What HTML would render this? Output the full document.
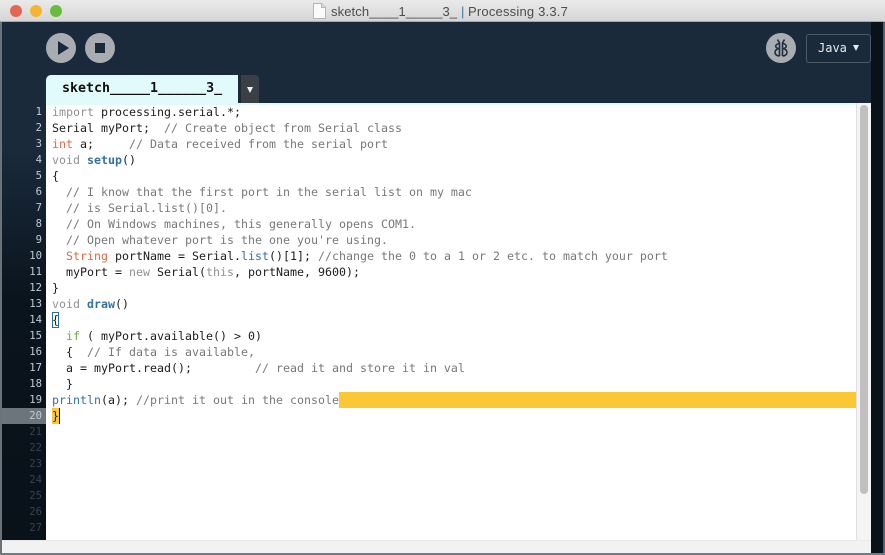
<!DOCTYPE html>
<html><head><meta charset="utf-8">
<style>
html,body{margin:0;padding:0;width:885px;height:555px;overflow:hidden;background:#5c6670;}
*{box-sizing:border-box}
.a{position:absolute}
#win{position:absolute;left:2px;top:0;width:869px;height:553px;background:#1a2a3b;overflow:hidden}
#bg-l{position:absolute;left:0;top:0;width:2px;height:555px;background:#6b7278}
#bg-r{position:absolute;left:871px;top:0;width:12px;height:555px;background:#091119}
#bg-r2{position:absolute;left:883px;top:0;width:2px;height:555px;background:#4f6272}
#title{position:absolute;left:0;top:0;width:885px;height:22px;background:linear-gradient(#eaeaea,#d6d6d6);border-bottom:1px solid #a9a9a9}
.dot{position:absolute;top:5px;width:12px;height:12px;border-radius:50%}
#ttl{position:absolute;left:331px;top:3px;font:13px/17px "Liberation Sans",sans-serif;color:#4c4c4c;white-space:pre}
#ttl2{position:absolute;left:468px;top:3px;font:13px/17px "Liberation Sans",sans-serif;color:#4c4c4c;white-space:pre;letter-spacing:.2px}
#code,#nums{position:absolute;font:11.63px/16px "DejaVu Sans Mono",monospace;white-space:pre}
#code{left:52px;top:104px;color:#1c1c1c}
#nums{left:2px;top:104px;width:40px;text-align:right;color:#c4cad0;font-size:10.6px}
#nums .d{color:#39424b}
.c{color:#787878}.k{color:#8f9295}.r{color:#dc6a45}.b{color:#33729f}.bb{color:#33729f;font-weight:bold}.g{color:#64b332}
</style></head>
<body>
<div id="bg-l"></div><div id="bg-r"></div><div id="bg-r2"></div>
<div id="win"></div>
<div id="title"></div>
<div class="dot" style="left:10px;background:#e4664f"></div>
<div class="dot" style="left:30px;background:#f5b62f"></div>
<div class="dot" style="left:50px;background:#68bd3f"></div>
<svg class="a" style="left:313px;top:3px" width="13" height="16"><path d="M.5.5H8.5L12.5 4.5V15.5H.5Z" fill="#fafafa" stroke="#b5b5b5"/><path d="M8.5.5V4.5H12.5" fill="#ddd" stroke="#b5b5b5"/></svg>
<div id="ttl" style="letter-spacing:.1px">sketch____1_____3_</div>
<div class="a" style="left:461px;top:3px;font:13px/17px 'Liberation Sans',sans-serif;color:#3b78ad">|</div>
<div id="ttl2">Processing 3.3.7</div>

<div class="a" style="left:46px;top:33px;width:30px;height:30px;border-radius:50%;background:#a9adb1"></div>
<svg class="a" style="left:46px;top:33px" width="30" height="30"><path d="M12 8V22L23 15Z" fill="#1a2a3b"/></svg>
<div class="a" style="left:85px;top:33px;width:30px;height:30px;border-radius:50%;background:#a9adb1"></div>
<div class="a" style="left:95px;top:43px;width:10px;height:10px;background:#1a2a3b"></div>

<div class="a" style="left:766px;top:33px;width:30px;height:30px;border-radius:50%;background:#a9adb1"></div>
<svg class="a" style="left:766px;top:33px" width="30" height="30" fill="none" stroke="#1f2f40" stroke-width="1.6"><path d="M11.5 6.5L13.5 10V23"/><path d="M18.5 6.5L16.5 10V23"/><path d="M13.5 10.5C8.5 11 8.5 15.5 13.5 15.5C7.5 16 7.5 23 13.5 23"/><path d="M16.5 10.5C21.5 11 21.5 15.5 16.5 15.5C22.5 16 22.5 23 16.5 23"/></svg>
<div class="a" style="left:806px;top:34px;width:65px;height:29px;border:1px solid #4c5966;border-radius:3px"></div>
<div class="a" style="left:818px;top:40px;font:12px/16px 'DejaVu Sans Mono',monospace;color:#e8ebee">Java</div>
<svg class="a" style="left:853px;top:45px" width="6" height="6"><path d="M0 0H6L3 6Z" fill="#e8ebee"/></svg>

<div class="a" style="left:46px;top:75px;width:192px;height:28px;background:#e0fbf9;border-radius:5px 0 0 0"></div>
<div class="a" style="left:62px;top:80px;font:bold 13.3px/17px 'DejaVu Sans Mono',monospace;color:#111;white-space:pre">sketch_____1______3_</div>
<div class="a" style="left:241px;top:75px;width:18px;height:28px;background:#3a4046;border-radius:0 4px 0 0"></div>
<svg class="a" style="left:247px;top:87px" width="6" height="6"><path d="M0 0H6L3 6Z" fill="#f2f2f2"/></svg>

<div class="a" style="left:2px;top:103px;width:44px;height:437px;background:linear-gradient(#1a2a3b 0,#1a2a3b 10%,#0a141d 45%,#091119 100%)"></div>
<div class="a" style="left:2px;top:408px;width:44px;height:16px;background:#6c757c"></div>
<div class="a" style="left:46px;top:103px;width:825px;height:437px;background:#fff"></div>
<div class="a" style="left:46px;top:103px;width:812px;height:2px;background:#e0fbf9"></div>
<div class="a" style="left:856px;top:103px;width:15px;height:437px;background:#f4f4f4;border-left:1px solid #e0e0e0"></div>
<div class="a" style="left:860px;top:105px;width:8px;height:389px;background:#c0c0c0;border-radius:4px"></div>
<div class="a" style="left:2px;top:540px;width:869px;height:13px;background:#f2f2f2;border-top:1px solid #e8e8e8"></div>
<div class="a" style="left:0;top:553px;width:885px;height:2px;background:#747b80"></div>

<div class="a" style="left:339px;top:392px;width:517px;height:16px;background:#f9c834"></div>
<div class="a" style="left:52px;top:408px;width:7px;height:16px;background:#f9c834"></div>
<div class="a" style="left:59px;top:408px;width:1px;height:16px;background:#111"></div>
<div class="a" style="left:52px;top:312px;width:7px;height:16px;border:1px solid #2f6f9c"></div>

<div id="nums">1
2
3
4
5
6
7
8
9
10
11
12
13
14
15
16
17
18
19
20
<span class="d">21
22
23
24
25
26
27</span></div>
<div id="code"><span class="k">import</span> processing.serial.*;
Serial myPort;  <span class="c">// Create object from Serial class</span>
<span class="r">int</span> a;     <span class="c">// Data received from the serial port</span>
<span class="k">void</span> <span class="bb">setup</span>()
{
  <span class="c">// I know that the first port in the serial list on my mac</span>
  <span class="c">// is Serial.list()[0].</span>
  <span class="c">// On Windows machines, this generally opens COM1.</span>
  <span class="c">// Open whatever port is the one you're using.</span>
  <span class="r">String</span> portName = Serial.<span class="b">list</span>()[1]; <span class="c">//change the 0 to a 1 or 2 etc. to match your port</span>
  myPort = <span class="k">new</span> Serial(<span class="k">this</span>, portName, 9600);
}
<span class="k">void</span> <span class="bb">draw</span>()
{
  <span class="g">if</span> ( myPort.available() &gt; 0)
  {  <span class="c">// If data is available,</span>
  a = myPort.read();         <span class="c">// read it and store it in val</span>
  }
<span class="b">println</span>(a); <span class="c">//print it out in the console</span>
}</div>
</body></html>
